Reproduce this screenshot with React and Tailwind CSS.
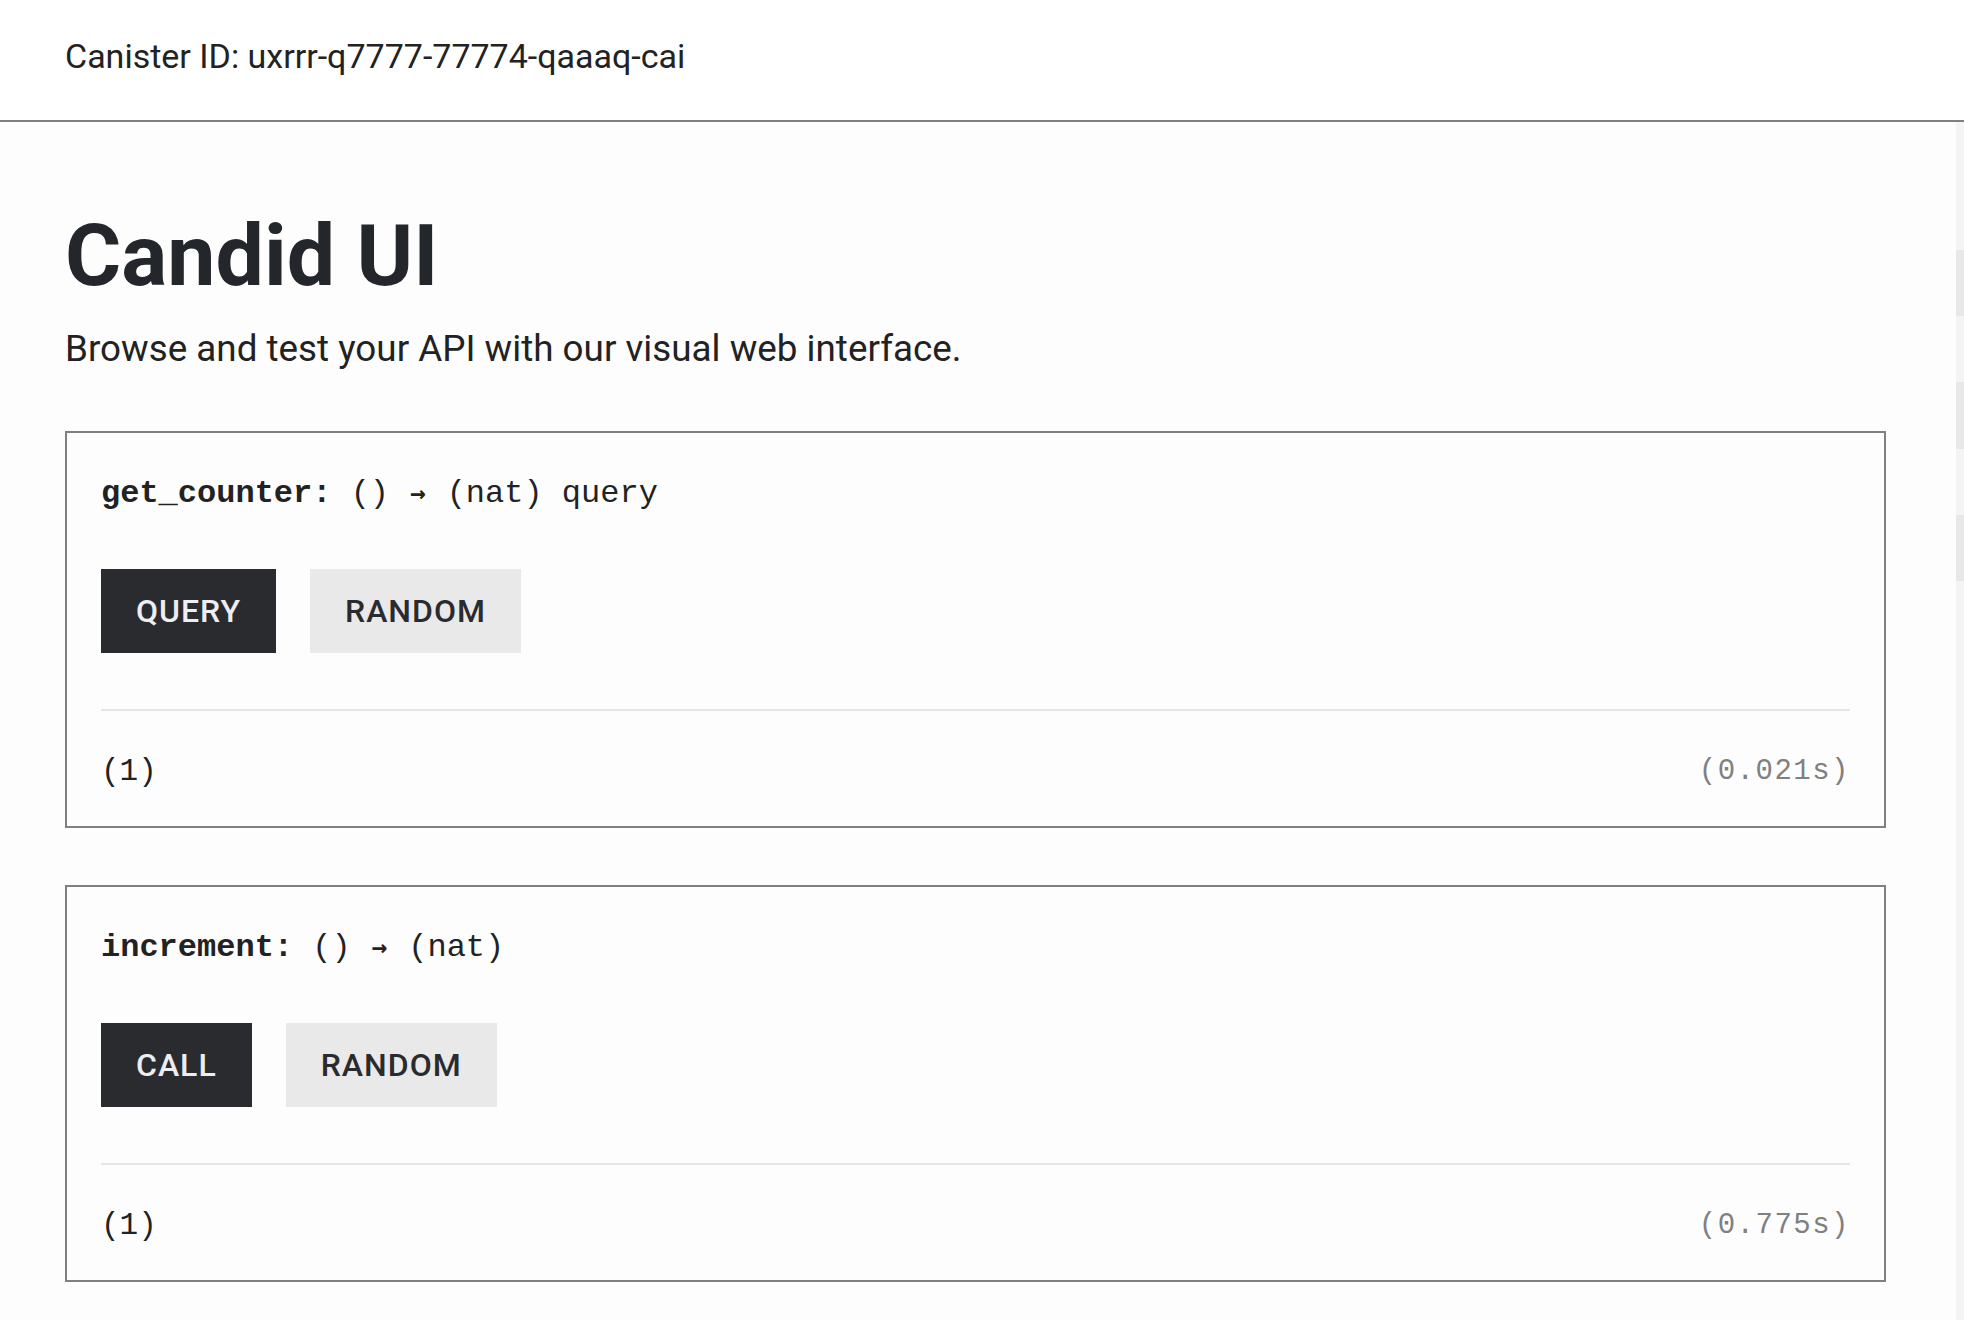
const sans = 'font-["Roboto","Liberation_Sans",sans-serif]'
const mono = 'font-["Liberation_Mono","Courier_New",monospace]'

function Arrow() {
  return (
    <span className='inline-block w-[19.2px] text-center font-["DejaVu_Sans_Mono",monospace] text-[26px] font-bold'>→</span>
  )
}

function MethodCard({ name, args, ret, mode, action, result, time }) {
  return (
    <section className="border-2 border-[#808080] px-[34px] pt-[41px] pb-[37px]">
      <div className={`${mono} text-[32px] leading-[38px] text-[#222]`}>
        <span className="font-bold">{name}:</span> {args} <Arrow /> {ret}{mode ? ` ${mode}` : ''}
      </div>
      <div className="flex gap-[34px] mt-[56px]">
        <button className="h-[84px] px-[35px] bg-[#2a2b2f] text-[#eceef4] text-[32px] font-medium tracking-[1px] uppercase">
          {action}
        </button>
        <button className="h-[84px] px-[35px] bg-[#e9e9e9] text-[#2a2b2f] text-[32px] font-medium tracking-[1px] uppercase">
          Random
        </button>
      </div>
      <div className="mt-[56px] border-t-2 border-[#e6e6e6]" />
      <div className={`${mono} mt-[44px] h-[34px] flex justify-between items-center`}>
        <span className="text-[31px] leading-[34px] text-[#222]">{result}</span>
        <span className="text-[29px] leading-[34px] text-[#808080] tracking-[1.5px]">{time}</span>
      </div>
    </section>
  )
}

export default function App() {
  return (
    <div className={`${sans} min-h-screen bg-white text-[#23272b]`}>
      <header className="h-[122px] border-b-2 border-[#808080] px-[65px] flex items-center pb-[8px]">
        <span className="text-[34px] text-[#222]">Canister ID: uxrrr-q7777-77774-qaaaq-cai</span>
      </header>
      <div className="flex min-h-[1198px]">
        <main className="flex-1 bg-[#fdfdfd] px-[65px] pt-[82px] pb-[40px]">
          <h1 className="text-[86px] font-bold leading-[1.2]">Candid UI</h1>
          <p className="text-[36.8px] leading-[54px] mt-[15px] text-[#222]">
            Browse and test your API with our visual web interface.
          </p>
          <div className="mt-[55px] w-[1821px] flex flex-col gap-[57px]">
            <MethodCard name="get_counter" args="()" ret="(nat)" mode="query" action="Query" result="(1)" time="(0.021s)" />
            <MethodCard name="increment" args="()" ret="(nat)" action="Call" result="(1)" time="(0.775s)" />
          </div>
        </main>
        <aside className="w-[8px] bg-[#f4f4f4] flex flex-col">
          <div className="h-[128px]" />
          <div className="h-[66px] bg-[#e8e8e8]" />
          <div className="h-[66px]" />
          <div className="h-[67px] bg-[#e8e8e8]" />
          <div className="h-[66px]" />
          <div className="h-[66px] bg-[#e8e8e8]" />
        </aside>
      </div>
    </div>
  )
}
